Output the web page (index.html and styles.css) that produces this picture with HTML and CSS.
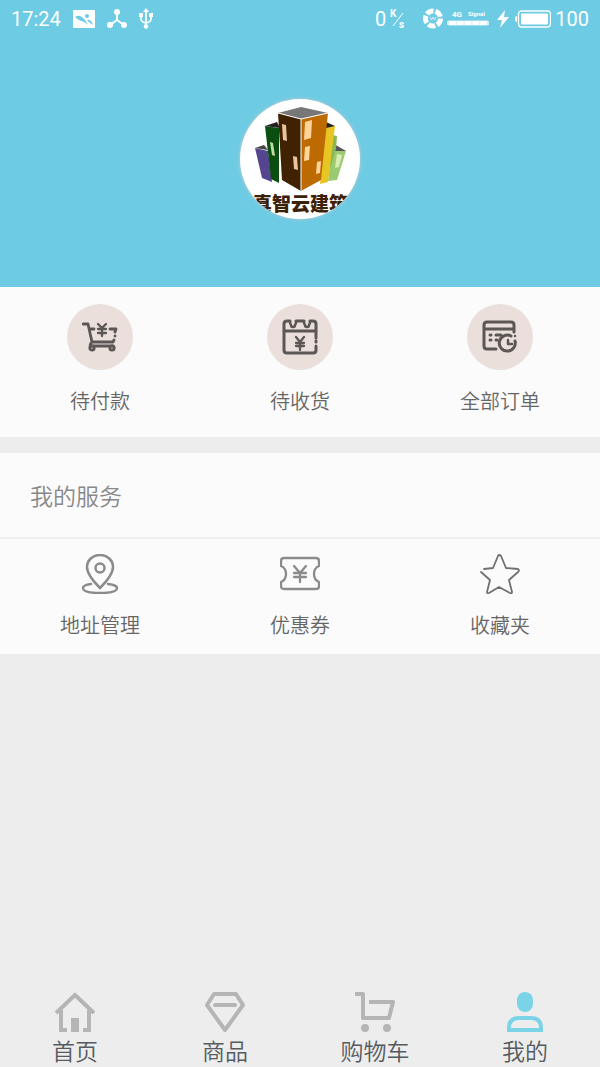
FILE: index.html
```
<!DOCTYPE html>
<html lang="zh-CN">
<head>
    <meta charset="UTF-8">
    <meta name="viewport" content="width=device-width, initial-scale=1.0">
    <title>我的</title>
    <link rel="stylesheet" href="styles.css">
</head>
<body>
    <!-- 头部 -->
    <header class="profile-header">
        <div class="status-bar">
            <div class="status-left">
                <span>17:24</span>
                <svg class="status-image" width="22" height="18" viewBox="0 0 22 18">
                    <rect width="22" height="18" rx="1" fill="#fff"/>
                    <path d="M2 7q4-3 8 1l2 2 3 5q-2-2-4-3-5-1-9-5zM14 10q4-1 6 5l-3-2z" fill="#6dcbe4"/>
                    <circle cx="14" cy="6" r="2" fill="#6dcbe4"/>
                </svg>
                <svg class="status-share" width="20" height="19" viewBox="0 0 20 19">
                    <path d="M10 3v8M10 11l-7 5M10 11l7 5" stroke="#fff" stroke-width="2" fill="none"/>
                    <circle cx="10" cy="3" r="3" fill="#fff"/>
                    <circle cx="3" cy="16" r="3" fill="#fff"/>
                    <circle cx="17" cy="16" r="3" fill="#fff"/>
                </svg>
                <svg width="14" height="21" viewBox="0 0 14 21">
                    <path d="M7 3v15M2 7v4q0 2 2 3l3 1 3-1q2-1 2-3V7" stroke="#fff" stroke-width="1.7" fill="none"/>
                    <path d="M7 0l3 4H4zM0 5h4v4H0zM10 5h4v4h-4z" fill="#fff"/>
                    <circle cx="7" cy="18.5" r="2.3" fill="#fff"/>
                </svg>
            </div>
            <div class="status-right">
                <span>0</span>
                <svg class="status-speed" width="16" height="20" viewBox="0 0 16 20">
                    <text class="speed-text" x="0" y="8">K</text>
                    <text class="speed-text" x="9" y="19">s</text>
                    <path d="M13 4L3 17" stroke="#fff"/>
                </svg>
                <svg class="status-ring" width="22" height="21" viewBox="0 0 22 21">
                    <circle cx="11" cy="10.5" r="7.5" fill="none" stroke="#fff" stroke-width="5" stroke-dasharray="7.4 2"/>
                    <path d="M8 9l1.5 3L11 9l1.5 3L14 9" stroke="#fff" stroke-width=".7" fill="none"/>
                </svg>
                <svg class="status-signal" width="42" height="20" viewBox="0 0 42 20">
                    <text class="net-text" x="5" y="8">4G</text>
                    <text class="signal-text" x="21" y="7">Signal</text>
                    <path d="M2 14h38" stroke="#fff" stroke-opacity=".65" stroke-width="5" stroke-linecap="round"/>
                    <path d="M2 14h38" stroke="#fff" stroke-width="4" stroke-dasharray="6.8 1"/>
                </svg>
                <svg class="status-flash" width="12" height="18" viewBox="0 0 12 18">
                    <path d="M8 0L0 10h5L3 18l9-11H7z" fill="#fff"/>
                </svg>
                <svg class="status-battery" width="36" height="18" viewBox="0 0 36 18">
                    <rect x="3.5" y="1" width="32" height="16" rx="3" fill="none" stroke="#fff" stroke-width="1.3"/>
                    <rect x="6" y="3.5" width="27" height="11" rx="1" fill="#fff"/>
                    <path d="M2 6v6Q0 12 0 9t2-3z" fill="#fff"/>
                </svg>
                <span>100</span>
            </div>
        </div>

        <div class="avatar">
            <svg width="120" height="120" viewBox="0 0 120 120" role="img" aria-label="真智云建筑">
                <path d="M15 49l13 3 4 31-10-4z" fill="#55458f"/>
                <path d="M15 49l9-3 4 5z" fill="#444"/>
                <path d="M25 27l14 2v55l-8-4z" fill="#0a4f10"/>
                <path d="M25 27l12-4 3 6z" fill="#222"/>
                <path d="M30 43l3 1 2 13-3-1z" fill="#c3dca0"/>
                <path d="M92 47l14 5-9 29-9 1z" fill="#9bca70"/>
                <path d="M94 45l12 7-13 0z" fill="#555"/>
                <path d="M97 55l5 1-3 12-4 1z" fill="#d7edb4"/>
                <path d="M92 36l5 1-1 13-6 20z" fill="#88b854"/>
                <path d="M86 28l9-1-7 56-8 2z" fill="#e7c522"/>
                <path d="M86 23l9 4-9 2z" fill="#222"/>
                <path d="M38 14l23-6 27 6-27 6z" fill="#777"/>
                <path d="M38 14l23 6v72l-19-11z" fill="#402100"/>
                <path d="M88 14l-27 6v72l20-11z" fill="#bd6b00"/>
                <path d="M38 14l23 6 27-6M61 20v72" fill="none" stroke="#fff"/>
                <path d="M42 25l4 1 1 16-4-1zM53 57l4 1 1 13-4-1z" fill="#ecc39b"/>
                <path d="M65 23l7-2-1 18-7 2zM65 48l5-1-1 14-5 1zM77 63l4-1-1 12-4 1z" fill="#ffd49b"/>
                <text class="logo-text" x="13" y="112">真智云建筑</text>
            </svg>
        </div>
    </header>

    <main>
        <!-- 订单 -->
        <nav class="orders grid">
            <a class="item" href="#">
                <span class="round">
                    <svg width="36" height="30" viewBox="0 0 36 30" fill="none" stroke="#5b5755" stroke-width="2.8" stroke-linecap="round" stroke-linejoin="round">
                        <path d="M1 2h5l4 18M8 7h4M28 7h6l-1 3M33 14h0M32 18l-1 2H10q-3 3-1 4h22"/>
                        <path d="M16 2l4 4 4-4M16 7h8M16 11h8M20 6v8" stroke-width="2.3"/>
                        <circle cx="10" cy="26" r="2.2"/>
                        <circle cx="30" cy="26" r="2.2"/>
                    </svg>
                </span>
                <span class="label">待付款</span>
            </a>
            <a class="item" href="#">
                <span class="round">
                    <svg width="36" height="36" viewBox="0 0 36 36" fill="none" stroke="#5b5755" stroke-width="3" stroke-linecap="round" stroke-linejoin="round">
                        <path d="M8 2H5Q2 2 2 5v7h32V5q0-3-3-3h-3M14 2h8M2 12v19q0 3 3 3h26q3 0 3-3v-4M34 12v7M34 22v1"/>
                        <path d="M8 3q0 2 1 3 0 2 2 2t2-2q1-1 1-3M22 3q0 2 1 3 0 2 2 2t2-2q1-1 1-3" stroke-width="2.5"/>
                        <path d="M14 18l4 5 4-5M14 24h8M14 27h8M18 23v8" stroke-width="2.3"/>
                    </svg>
                </span>
                <span class="label">待收货</span>
            </a>
            <a class="item" href="#">
                <span class="round">
                    <svg width="36" height="34" viewBox="0 0 36 34" fill="none" stroke="#5b5755" stroke-width="3" stroke-linecap="round" stroke-linejoin="round">
                        <path d="M14 29H5q-3 0-3-3V5q0-3 3-3h24q3 0 3 3v7M2 9h30"/>
                        <path d="M8 15h1M14 15h5M8 20h1M14 20h1"/>
                        <path d="M33 21a8 8 0 1 1-4-5"/>
                        <path d="M26 20v4h4M33 16h0" stroke-width="2.5"/>
                    </svg>
                </span>
                <span class="label">全部订单</span>
            </a>
        </nav>

        <!-- 我的服务 -->
        <section class="services">
            <h2>我的服务</h2>
            <div class="grid">
                <a class="item" href="#">
                    <svg width="40" height="40" viewBox="0 0 40 40" fill="none" stroke="#8b8b8b" stroke-width="2.5" stroke-linecap="round" stroke-linejoin="round">
                        <path d="M20 34Q7 21 7 13a13 12 0 0 1 26 0q0 8-13 21z"/>
                        <circle cx="20" cy="14" r="4.5"/>
                        <path d="M11 30q-8 1-8 4 0 5 17 5t17-5q0-3-9-4"/>
                    </svg>
                    <span class="label">地址管理</span>
                </a>
                <a class="item" href="#">
                    <svg width="40" height="40" viewBox="0 0 40 40" fill="none" stroke="#8b8b8b" stroke-width="2.3" stroke-linecap="round" stroke-linejoin="round">
                        <path d="M4 4h32q3 0 3 3v5q-5 2-5 8t5 8v4q0 3-3 3H4q-3 0-3-3v-4q5-2 5-8t-5-8V7q0-3 3-3z"/>
                        <path d="M14 12l6 7 6-7M14 19h12M14 23h12M20 19v9"/>
                    </svg>
                    <span class="label">优惠券</span>
                </a>
                <a class="item" href="#">
                    <svg width="40" height="40" viewBox="0 0 40 40" fill="none" stroke="#707070" stroke-width="1.8" stroke-linecap="round" stroke-linejoin="round">
                        <path d="M4 15l9-1 5-12q1-2 3 0l5 12 12 1q2 1 0 3l-9 8 3 12q0 2-2 1l-11-6-10 6q-2 1-2-1l3-12-9-8"/>
                    </svg>
                    <span class="label">收藏夹</span>
                </a>
            </div>
        </section>
    </main>

    <!-- 底部导航 -->
    <nav class="tab-bar">
        <a class="tab" href="#">
            <svg width="40" height="40" viewBox="0 0 40 40" fill="none" stroke="#b5b5b5" stroke-width="4">
                <path d="M1 21L20 3l19 18M6 18v20h6M34 18v20h-6"/>
                <path d="M16 26h8v14h-8z" fill="#b5b5b5" stroke="none"/>
            </svg>
            <span>首页</span>
        </a>
        <a class="tab" href="#">
            <svg width="40" height="40" viewBox="0 0 40 40" fill="none" stroke="#b5b5b5" stroke-width="4" stroke-linejoin="round">
                <path d="M9 2h22l7 11-18 25L2 13z"/>
                <path d="M10 13h20" stroke-linecap="round"/>
            </svg>
            <span>商品</span>
        </a>
        <a class="tab" href="#">
            <svg width="40" height="40" viewBox="0 0 40 40" fill="none" stroke="#b5b5b5" stroke-width="4" stroke-linejoin="round">
                <path d="M0 2h8v24h26l4-16H14"/>
                <circle cx="10" cy="36" r="4" fill="#b5b5b5" stroke="none"/>
                <circle cx="32" cy="36" r="4" fill="#b5b5b5" stroke="none"/>
            </svg>
            <span>购物车</span>
        </a>
        <a class="tab" href="#" aria-current="page">
            <svg width="40" height="40" viewBox="0 0 40 40">
                <rect x="12" y="0" width="16" height="20" rx="8" fill="#7bd3e8"/>
                <path d="M4 38v-2q0-10 10-10h12q10 0 10 10v2z" fill="none" stroke="#7bd3e8" stroke-width="4"/>
            </svg>
            <span>我的</span>
        </a>
    </nav>
</body>
</html>
```
FILE: styles.css
```
/* 公共样式 */
* {
    margin: 0;
    padding: 0;
    box-sizing: border-box;
}

body {
    display: flex;
    flex-direction: column;
    min-height: 100vh;
    font-family: "Noto Sans CJK SC", sans-serif;
    font-weight: 350;
    background-color: #ededed;
}

a {
    color: inherit;
    text-decoration: none;
}

svg {
    display: block;
    flex-shrink: 0;
}

/* 头部 */
.profile-header {
    padding-bottom: 68px;
    background-color: #6dcbe4;
}

.status-bar {
    display: flex;
    justify-content: space-between;
    height: 37px;
    padding: 0 11px;
    font-family: Roboto, sans-serif;
    font-size: 20px;
    font-weight: 400;
    color: #fff;
}

.status-left,
.status-right {
    display: flex;
    align-items: center;
}

.status-left {
    gap: 12px;
}

.status-speed {
    margin-left: 4px;
}

.status-ring {
    margin-left: 16px;
}

.status-signal {
    margin-left: 3px;
}

.status-flash {
    margin-left: 8px;
}

.status-battery {
    margin: 0 4px 0 6px;
}

.speed-text {
    font-size: 10px;
    font-weight: 700;
    fill: #fff;
}

.net-text {
    font-size: 8px;
    font-weight: 700;
    fill: #fff;
}

.signal-text {
    font-size: 6px;
    font-weight: 700;
    fill: #fff;
}

.avatar {
    width: 120px;
    height: 120px;
    margin: 62px auto 0;
    overflow: hidden;
    border-radius: 50%;
    background-color: #fff;
    box-shadow: 0 0 3px 1px #a5cbd5;
}

.logo-text {
    font-size: 19px;
    font-weight: 900;
    fill: #3c2008;
}

/* 三列图标 */
.grid {
    display: grid;
    grid-template-columns: repeat(3, 1fr);
}

.item {
    display: flex;
    flex-direction: column;
    align-items: center;
}

.label {
    font-size: 20px;
    line-height: 30px;
    color: #666;
}

.orders {
    padding: 17px 0 21px;
    background-color: #fbfbfb;
}

.orders .item {
    gap: 16px;
}

.round {
    display: flex;
    align-items: center;
    justify-content: center;
    width: 66px;
    height: 66px;
    border-radius: 50%;
    background-color: #eadfdb;
}

/* 我的服务 */
.services {
    margin-top: 16px;
    background-color: #fbfbfb;
}

.services h2 {
    padding: 0 30px;
    border-bottom: 2px solid #efefef;
    font-size: 23px;
    font-weight: 350;
    line-height: 84px;
    color: #888;
}

.services .grid {
    padding: 15px 0 14px;
}

.services .item {
    gap: 16px;
}

/* 底部导航 */
.tab-bar {
    display: grid;
    grid-template-columns: repeat(4, 1fr);
    margin-top: auto;
    padding: 8px 0 1px;
}

.tab {
    display: flex;
    flex-direction: column;
    align-items: center;
    gap: 2px;
    font-size: 23px;
    line-height: 32px;
    color: #555b60;
}
```
